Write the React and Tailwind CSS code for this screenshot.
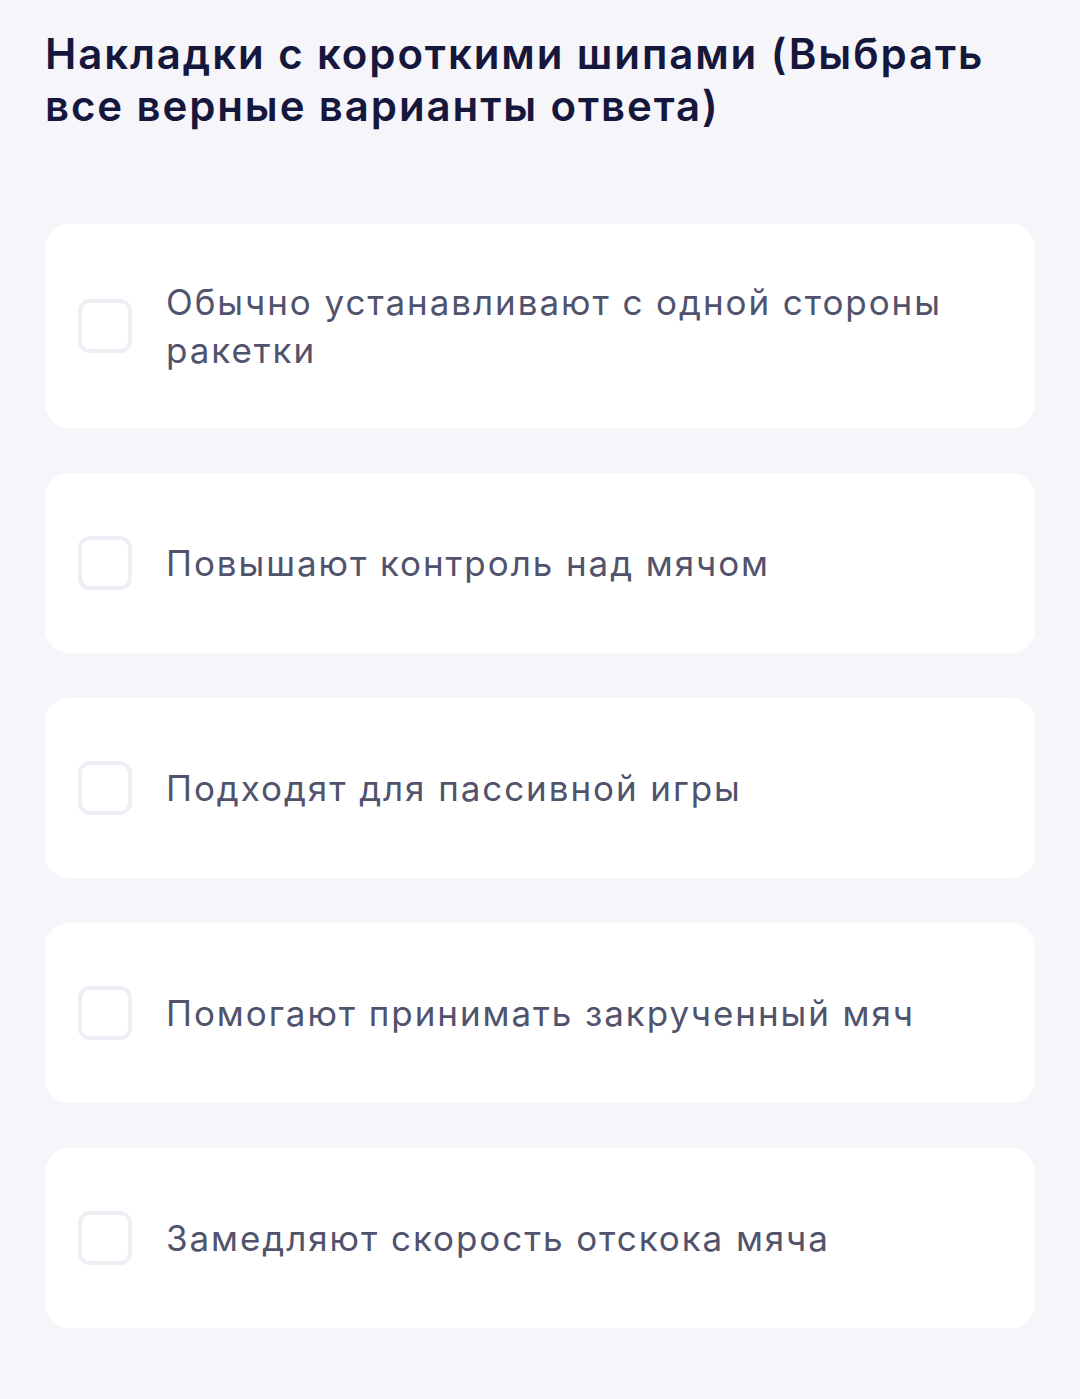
import React, { useState } from 'react';

const options = [
  'Обычно устанавливают с одной стороны ракетки',
  'Повышают контроль над мячом',
  'Подходят для пассивной игры',
  'Помогают принимать закрученный мяч',
  'Замедляют скорость отскока мяча',
];

const Option = ({ label, checked, onToggle }) => (
  <button
    type="button"
    onClick={onToggle}
    className="flex min-h-[180px] w-full items-center gap-[34px] rounded-[24px] bg-white py-[54px] pl-[33px] pr-[60px] text-left"
  >
    <span
      className={`h-[54px] w-[54px] shrink-0 rounded-[12px] border-4 ${
        checked ? 'border-[#4f46e5] bg-[#4f46e5]' : 'border-[#eeeef4] bg-white'
      }`}
    />
    <span className="text-[35px] leading-[48px] tracking-[0.055em] text-[#51536d]">{label}</span>
  </button>
);

const App = () => {
  const [selected, setSelected] = useState([]);

  const toggle = (i) =>
    setSelected((prev) => (prev.includes(i) ? prev.filter((x) => x !== i) : [...prev, i]));

  return (
    <div
      className="min-h-screen bg-[#f5f5fa] px-[45px] pt-[28px] pb-[72px]"
      style={{ fontFamily: 'Inter, "Noto Sans", sans-serif' }}
    >
      <h1 className="pr-[50px] text-[42px] font-semibold leading-[52px] tracking-[0.045em] text-[#15173c]">
        Накладки с короткими шипами (Выбрать все верные варианты ответа)
      </h1>

      <div className="mt-[92px] flex flex-col gap-[45px]">
        {options.map((label, i) => (
          <Option key={i} label={label} checked={selected.includes(i)} onToggle={() => toggle(i)} />
        ))}
      </div>
    </div>
  );
};

export default App;
